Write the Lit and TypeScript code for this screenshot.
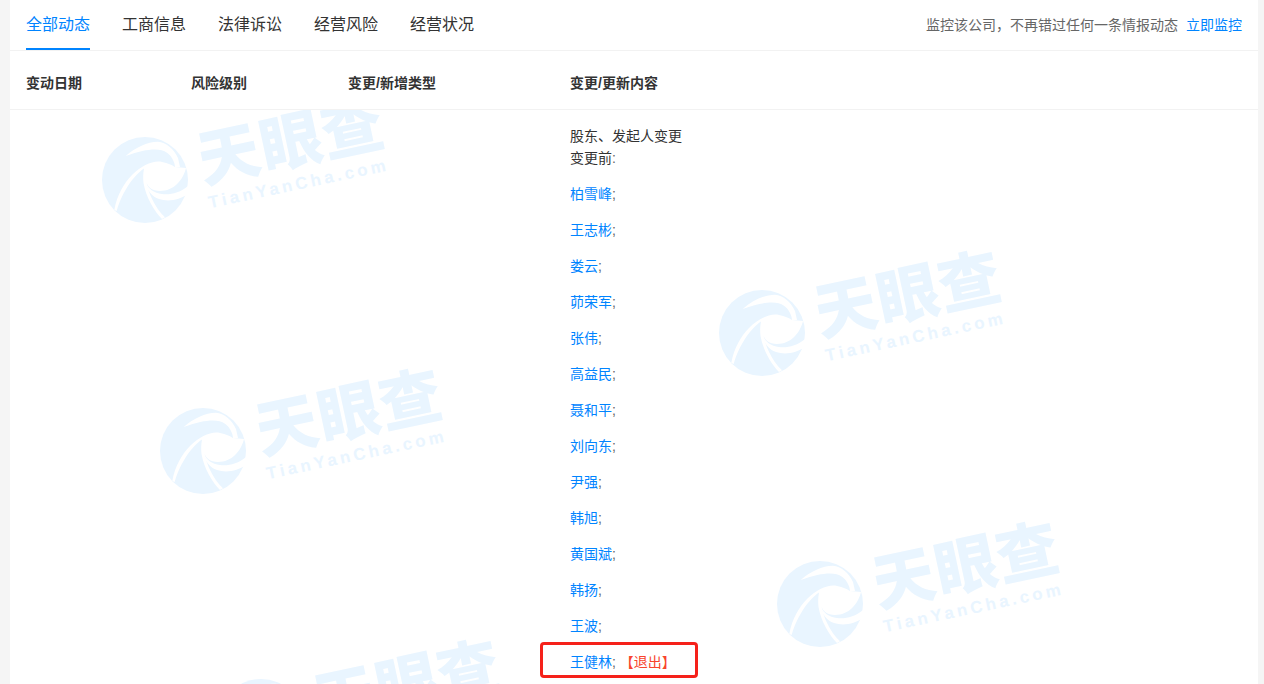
import { LitElement, html, css, svg } from "lit";
import { customElement } from "lit/decorators.js";

const NAMES = ["柏雪峰","王志彬","娄云","茆荣军","张伟","高益民","聂和平","刘向东","尹强","韩旭","黄国斌","韩扬","王波"];
const TABS = ["全部动态","工商信息","法律诉讼","经营风险","经营状况"];
const MARKS: [number, number][] = [[102,27],[719,180],[160,298],[777,451],[218,569]];

const mark = () => svg`
  <svg class="mark-svg" width="330" height="130" viewBox="0 0 330 130">
    <circle cx="43" cy="43" r="43" fill="#e9f5ff"/>
    <path fill="#fff" d="M23.7 19 C34 10 45 5 56 4.7 C64 5 72 12 76 21 L78 30 L73 30 C73 26 70 19 65 15.7 C58 11 46 11 23.7 19 Z"/>
    <path fill="#fff" d="M12.3 73 C15 58 22 46 30 38 C40 28 52 23 60 25 C66 26 70 28 73 30 L84 31 C81 43 72 54 58 54 C50 54 46 50 44.7 46 C46 54 52 70 63 80.3 L60 82 C52 74 44 60 41.5 46 C41 41 41 37 42 31.5 C32 38 20 55 14.7 74 Z"/>
    <path fill="#fff" d="M43 44 C46 52 52 56 60 57 C68 58 78 56 86 49 L85.5 57 C78 63 66 65 57 62 C50 60 44 52 43 44 Z"/>
    <g transform="rotate(-12 97 45)">
      <text class="wm-cn" x="101" y="47">天眼查</text>
      <text class="wm-en" x="102" y="73">TianYanCha.com</text>
    </g>
  </svg>`;

@customElement("app-root")
export class AppRoot extends LitElement {
  static styles = css`
    :host { display: block; height: 684px; overflow: hidden; background: #f5f5f5;
      font-family: "Liberation Sans", "Noto Sans CJK SC", sans-serif; color: #333; font-size: 14px; }
    .card { position: relative; height: 684px; margin: 0 6px 0 10px; background: #fff; overflow: hidden; }
    .tabs { display: flex; align-items: stretch; justify-content: space-between; height: 50px;
      padding: 0 16px; border-bottom: 1px solid #f2f2f2; }
    .tablist { display: flex; gap: 32px; }
    .tab { font-size: 16px; line-height: 49px; height: 50px; box-sizing: border-box; }
    .tab.on { color: #0084ff; border-bottom: 2px solid #0084ff; }
    .monitor { line-height: 50px; color: #666; font-size: 14px; display: flex; gap: 8px; }
    .monitor a { color: #0084ff; }
    .head { display: grid; grid-template-columns: 165px 157px 222px 1fr; align-items: center;
      padding: 5px 16px 0; box-sizing: border-box; height: 59px; border-bottom: 1px solid #f2f2f2; font-weight: 700; font-size: 14px; line-height: 20px; }
    .body { position: relative; height: 574px; overflow: hidden; }
    .content { position: relative; margin-left: 560px; padding-top: 15px; line-height: 22px; }
    .title { color: #333; }
    .before { margin-bottom: 7px; }
    .row { height: 36px; line-height: 36px; color: #0084ff; white-space: nowrap; }
    .semi { color: #666; }
    .quit { color: #f8452d; }
    .wm { position: absolute; display: block; }
    .mark-svg { display: block; overflow: visible; }
    .wm-cn { font-size: 62px; font-weight: 900; fill: #e9f5ff; letter-spacing: 1px; font-family: "Noto Sans CJK SC", sans-serif; }
    .wm-en { font-size: 17px; font-weight: 700; fill: #e9f5ff; letter-spacing: 3.4px; font-family: "Liberation Sans", sans-serif; }
    .box { position: absolute; left: 530px; top: 532px; width: 158px; height: 36px; box-sizing: border-box;
      border: 3px solid #f5211a; border-radius: 4px; }
  `;

  render() {
    return html`<div class="card">
      <div class="tabs">
        <div class="tablist">${TABS.map((t, i) => html`<div class="tab ${i === 0 ? "on" : ""}">${t}</div>`)}</div>
        <div class="monitor"><span>监控该公司，不再错过任何一条情报动态</span><a>立即监控</a></div>
      </div>
      <div class="head"><div>变动日期</div><div>风险级别</div><div>变更/新增类型</div><div>变更/更新内容</div></div>
      <div class="body">
        ${MARKS.map(([x, y]) => html`<div class="wm" style="left:${x - 10}px;top:${y}px">${mark()}</div>`)}
        <div class="content">
          <div class="title">股东、发起人变更</div>
          <div class="before">变更前<span class="semi">:</span></div>
          ${NAMES.map((n) => html`<div class="row">${n}<span class="semi">;</span></div>`)}
          <div class="row">王健林<span class="semi">;</span> <span class="quit">【退出】</span></div>
        </div>
        <div class="box"></div>
      </div>
    </div>`;
  }
}
